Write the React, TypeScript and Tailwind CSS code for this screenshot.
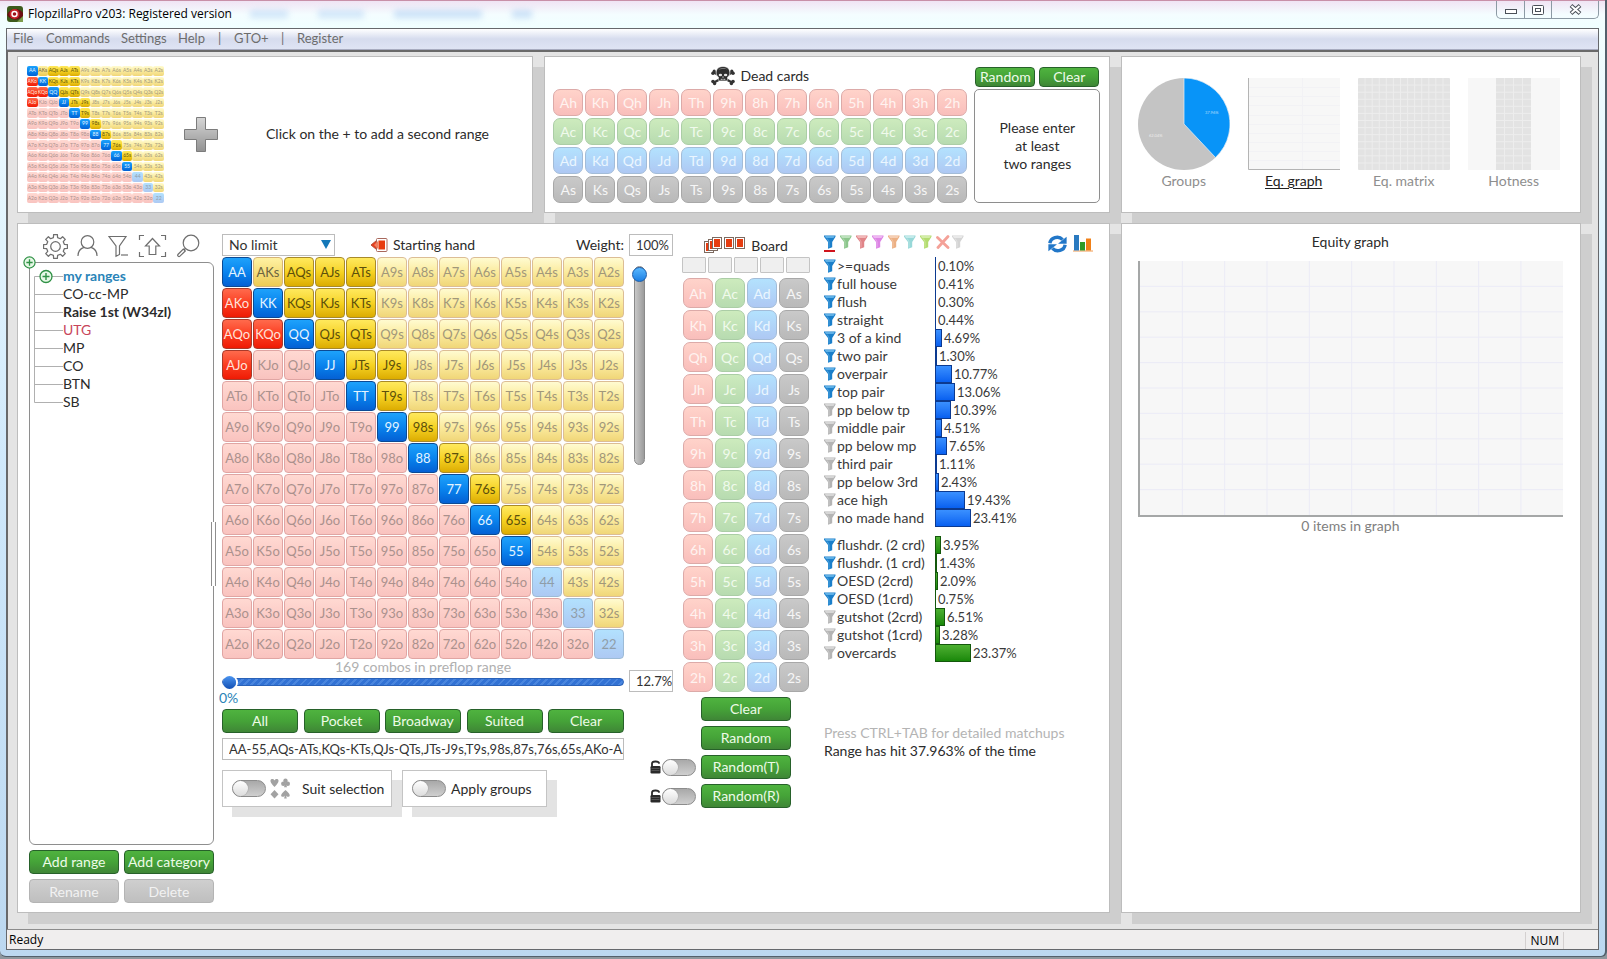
import React from "react";

const RANKS = ["A", "K", "Q", "J", "T", "9", "8", "7", "6", "5", "4", "3", "2"];

const SELECTED = new Set(
  "AA KK QQ JJ TT 99 88 77 66 55 AQs AJs ATs KQs KJs KTs QJs QTs JTs J9s T9s 98s 87s 76s 65s AKo AQo AJo KQo".split(" "),
);

const CELL = {
  pairOn: "border-[#0b4a94] bg-linear-to-b from-[#1ea2fb] via-[#0a84ee] to-[#0560d4] text-[#e4f4ff]",
  pairOff: "border-[#9dbbd6] bg-linear-to-b from-[#b2e1fe] to-[#adc9f3] text-[#8f9da8]",
  suitedOn: "border-[#a88a2a] bg-linear-to-b from-[#ffe95c] via-[#f6d321] to-[#dcac00] text-[#5c4f0c]",
  suitedHalf: "border-[#d6b478] bg-linear-to-b from-[#fff2a2] to-[#edcb52] text-[#6c6440]",
  suitedOff: "border-[#dcbd95] bg-linear-to-b from-[#fffbd0] via-[#fbeb9e] to-[#f0d678] text-[#a1977a]",
  offOn: "border-[#a93a2a] bg-linear-to-b from-[#ff6a4c] via-[#fb3b1e] to-[#ef1a04] text-[#ffe2da]",
  offOff: "border-[#e0a5a3] bg-linear-to-b from-[#ffd9d2] to-[#f9c3bf] text-[#ab918d]",
};

function handAt(r: number, c: number) {
  if (r === c) return RANKS[r] + RANKS[r];
  return r < c ? RANKS[r] + RANKS[c] + "s" : RANKS[c] + RANKS[r] + "o";
}

function cellStyle(r: number, c: number) {
  const hand = handAt(r, c);
  const on = SELECTED.has(hand);
  if (r === c) return on ? CELL.pairOn : CELL.pairOff;
  if (hand === "AKs") return CELL.suitedHalf;
  if (r < c) return on ? CELL.suitedOn : CELL.suitedOff;
  return on ? CELL.offOn : CELL.offOff;
}

function HandMatrix() {
  return (
    <div className="mt-px grid grid-cols-13 gap-px">
      {RANKS.map((_, r) =>
        RANKS.map((_, c) => (
          <button
            key={r + "-" + c}
            className={"flex h-[30px] min-w-0 items-center justify-center rounded-[4px] border px-0 pt-[2px] pb-0 text-[13px] " + cellStyle(r, c)}
          >
            {handAt(r, c)}
          </button>
        )),
      )}
    </div>
  );
}

function MiniMatrix() {
  return (
    <button aria-label="Range 1" className="grid size-[137px] shrink-0 grid-cols-13 grid-rows-13 gap-y-px">
      {RANKS.map((_, r) =>
        RANKS.map((_, c) => (
          <span
            key={r + "-" + c}
            className={"flex min-w-0 items-center justify-center overflow-hidden rounded-[2px] text-[5px] leading-none " + cellStyle(r, c)}
          >
            {handAt(r, c)}
          </span>
        )),
      )}
    </button>
  );
}

const SUITS = [
  { id: "h", style: "border-[#dcaaa8] bg-linear-to-b from-[#ffd3ca] to-[#f9bebb] text-[#fff3f0]" },
  { id: "c", style: "border-[#abcda6] bg-linear-to-b from-[#cdebbd] to-[#b7dbb0] text-[#f0faec]" },
  { id: "d", style: "border-[#a3bcd8] bg-linear-to-b from-[#b3e2fe] to-[#aec8f3] text-[#eaf6ff]" },
  { id: "s", style: "border-[#a8a8a8] bg-linear-to-b from-[#c9c9c9] to-[#b9b9b9] text-[#f6f6f6]" },
];

function Card({ rank, suit, size }: { rank: string; suit: (typeof SUITS)[number]; size: string }) {
  return (
    <button className={"flex min-w-0 items-center justify-center rounded-[7px] border p-0 text-[14px] " + size + " " + suit.style}>
      {rank + suit.id}
    </button>
  );
}

function GreenButton({ children, className = "" }: { children: React.ReactNode; className?: string }) {
  return (
    <button
      className={
        "flex items-center justify-center rounded-[4px] border border-[#27612a] bg-linear-to-b from-[#4fb33f] via-[#45a338] to-[#3f8636] pb-px text-[14px] whitespace-nowrap text-[#eefbe8] " +
        className
      }
    >
      {children}
    </button>
  );
}

function Toggle({ id, label }: { id: string; label?: string }) {
  return (
    <input
      id={id}
      type="checkbox"
      aria-label={label}
      className="h-[17px] w-[34px] shrink-0 appearance-none rounded-full border border-[#8c8c8c] bg-linear-to-b from-[#a9a9a9] to-[#cfcfcf] before:block before:size-[15px] before:rounded-full before:bg-linear-to-b before:from-[#ffffff] before:to-[#dcdcdc] before:shadow-[0_0_1px_#666] before:content-['']"
    />
  );
}

function Funnel({ color, light }: { color: string; light: string }) {
  return (
    <svg width="12" height="14" viewBox="0 0 12 14" className="shrink-0" aria-hidden="true">
      <path d="M0 0.600h11.500v1.200L8.200 7v5.200L4 13.800V7L0 1.800z" fill={color} />
      <path d="M0.800 1h9.900L9.600 3H2z" fill={light} opacity="0.700" />
      <path d="M3.200 3.500L5 6.800V12.500" fill="none" stroke={light} strokeWidth="1" opacity="0.500" />
    </svg>
  );
}

function Plus() {
  return (
    <svg width="13" height="13" viewBox="0 0 14 14" aria-hidden="true">
      <circle cx="7" cy="7" r="6" fill="#e6f8e6" stroke="#2f9145" strokeWidth="1.3" />
      <path d="M3.6 7h6.8M7 3.6v6.8" stroke="#2f9145" strokeWidth="1.4" />
    </svg>
  );
}

function Skull() {
  return (
    <svg width="24" height="20" viewBox="0 0 24 20" aria-hidden="true">
      <g stroke="#333" strokeWidth="2.4" strokeLinecap="round">
        <path d="M3 6.5l18 10M21 6.5l-18 10" />
      </g>
      <g fill="#333">
        <circle cx="2" cy="7.3" r="1.8" />
        <circle cx="3.2" cy="5.2" r="1.6" />
        <circle cx="22" cy="7.3" r="1.8" />
        <circle cx="20.8" cy="5.2" r="1.6" />
        <circle cx="2" cy="15.5" r="1.8" />
        <circle cx="3.6" cy="17.6" r="1.7" />
        <circle cx="22" cy="15.5" r="1.8" />
        <circle cx="20.4" cy="17.6" r="1.7" />
      </g>
      <path d="M12 0.500c-4.600 0-6.800 2.800-6.800 6 0 2.300.8 3.700 2.200 4.500v2.600c0 .9.600 1.300 1.300 1.300h6.600c.7 0 1.300-.4 1.300-1.300V11c1.400-.8 2.200-2.200 2.200-4.500 0-3.200-2.200-6-6.800-6z" fill="#2e2e2e" stroke="#fff" strokeWidth="0.6" />
      <path d="M7.500 3.800c1.200-2.300 7.500-2.600 9-.2-2.200-.8-6.800-.8-9 .2z" fill="#777" />
      <ellipse cx="9.400" cy="9" rx="1.700" ry="1.300" fill="#e6e6e6" />
      <ellipse cx="14.600" cy="9" rx="1.700" ry="1.300" fill="#e6e6e6" />
      <path d="M12 10l-.9 1.500h1.800zM9.800 12.800h.9v1.300h-.9zM11.550 12.800h.9v1.300h-.9zM13.300 12.800h.9v1.300h-.9z" fill="#e6e6e6" />
    </svg>
  );
}

const GEAR_TEETH = [0, 45, 90, 135, 180, 225, 270, 315];

function gearPath() {
  const pts: string[] = [];
  GEAR_TEETH.forEach((deg) => {
    [
      [-13, 8.8],
      [-9, 11.6],
      [9, 11.6],
      [13, 8.8],
    ].forEach(([off, rad]) => {
      const a = ((deg + off) * Math.PI) / 180;
      pts.push((12 + rad * Math.cos(a)).toFixed(2) + " " + (12 + rad * Math.sin(a)).toFixed(2));
    });
  });
  return "M" + pts.join("L") + "z";
}

function Toolbar() {
  const line = { fill: "none", stroke: "#6e6e6e", strokeWidth: 1.2 } as const;
  return (
    <div className="flex h-[28px] items-start pl-[14px]">
      <button aria-label="Settings" className="mr-[9px]">
        <svg width="25" height="25" viewBox="0 0 24 24" {...line} strokeLinejoin="round">
          <path d={gearPath()} />
          <circle cx="12" cy="12" r="4.600" />
        </svg>
      </button>
      <button aria-label="Profile" className="mr-[10px]">
        <svg width="21" height="24" viewBox="0 0 21 24" {...line}>
          <circle cx="10.500" cy="8" r="6.300" />
          <path d="M1 22c0-5 2.500-7.500 6-8.600M20 22c0-5-2.500-7.500-6-8.600" />
        </svg>
      </button>
      <button aria-label="Filter" className="mr-[10px]">
        <svg width="20" height="24" viewBox="0 0 20 24" {...line}>
          <path d="M1 2.500h17L11.500 12v8.500l-3.500 1.800V12z" />
          <path d="M13 21h7" />
        </svg>
      </button>
      <button aria-label="Load" className="mr-[10px]">
        <svg width="29" height="24" viewBox="0 0 29 24" {...line}>
          <path d="M6 1.500H1.500V6M23 1.500h4.500V6M6 22.500H1.500V18M23 22.500h4.500V18" />
          <path d="M14.500 4.500l7 7.500h-3.700v8.500h-6.600V12H7.500z" />
        </svg>
      </button>
      <button aria-label="Search">
        <svg width="23" height="24" viewBox="0 0 23 24" {...line}>
          <circle cx="14" cy="9" r="7.800" />
          <path d="M8.400 14.500L6.800 16M6.300 15l2 2-5.600 5.400c-1 .8-2.600-.8-1.800-1.900z" />
        </svg>
      </button>
    </div>
  );
}

const TREE = [
  { name: "my ranges", style: "font-bold text-[#2a84b8]", plus: true },
  { name: "CO-cc-MP", style: "" },
  { name: "Raise 1st (W34zl)", style: "font-bold" },
  { name: "UTG", style: "text-[#c8455a]" },
  { name: "MP", style: "" },
  { name: "CO", style: "" },
  { name: "BTN", style: "" },
  { name: "SB", style: "" },
];

function RangeTree() {
  return (
    <div className="relative flex-1 rounded-[6px] rounded-tl-none border border-[#8e8e8e] pt-[4px] pl-[4px]">
      <button aria-label="Expand all" className="absolute -top-[7px] -left-[7px]">
        <Plus />
      </button>
      <ul>
        {TREE.map((t, i) => (
          <li key={t.name} className={"flex h-[18px] items-center " + t.style}>
            <svg width="29" height="18" className="shrink-0" aria-hidden="true">
              <path
                d={i === 0 ? "M.5 18V9.500H29" : i === TREE.length - 1 ? "M.5 0V9.500H29" : "M.5 0V18M.5 9.500H29"}
                fill="none"
                stroke="#b0b0b0"
              />
              {t.plus && (
                <>
                  <circle cx="12" cy="9.500" r="6" fill="#e6f8e6" stroke="#2f9145" strokeWidth="1.300" />
                  <path d="M8.500 9.500h7M12 6v7" stroke="#2f9145" strokeWidth="1.400" />
                </>
              )}
            </svg>
            <a href="#" className="text-[14px] leading-[18px]">
              {t.name}
            </a>
          </li>
        ))}
      </ul>
      <div className="absolute top-[259px] -right-[3px] h-[64px] w-[5px] border-x border-[#8e8e8e] bg-white" />
    </div>
  );
}

const MADE: [string, number, boolean][] = [
  [">=quads", 0.1, true],
  ["full house", 0.41, true],
  ["flush", 0.3, true],
  ["straight", 0.44, true],
  ["3 of a kind", 4.69, true],
  ["two pair", 1.3, true],
  ["overpair", 10.77, true],
  ["top pair", 13.06, true],
  ["pp below tp", 10.39, false],
  ["middle pair", 4.51, false],
  ["pp below mp", 7.65, false],
  ["third pair", 1.11, false],
  ["pp below 3rd", 2.43, false],
  ["ace high", 19.43, false],
  ["no made hand", 23.41, false],
];

const DRAWS: [string, number, boolean][] = [
  ["flushdr. (2 crd)", 3.95, true],
  ["flushdr. (1 crd)", 1.43, true],
  ["OESD (2crd)", 2.09, true],
  ["OESD (1crd)", 0.75, true],
  ["gutshot (2crd)", 6.51, false],
  ["gutshot (1crd)", 3.28, false],
  ["overcards", 23.37, false],
];

function StatTable({ rows, bar, className = "" }: { rows: [string, number, boolean][]; bar: string; className?: string }) {
  return (
    <table className={"w-full table-fixed border-collapse text-[14px] leading-[18px] text-[#3a3a3a] " + className}>
      <tbody>
        {rows.map(([name, pct, on]) => (
          <tr key={name} className="h-[18px]">
            <td className="w-[13px] p-0">
              <button aria-label={"Filter " + name} className="block">
                {on ? <Funnel color="#1b7fca" light="#7cc4f2" /> : <Funnel color="#b4b4b4" light="#e4e4e4" />}
              </button>
            </td>
            <th scope="row" className="w-[98px] p-0 text-left font-normal whitespace-nowrap">
              {name}
            </th>
            <td className="p-0">
              <div className="flex">
                <span
                  className={"box-border h-[18px] border-y border-l " + (pct < 1 ? "border-r-0 " : "border-r ") + bar}
                  style={{ width: Math.max(1, Math.round(pct * 1.55)) }}
                />
                <span className="pl-[2px] text-[13px]">{pct.toFixed(2)}%</span>
              </div>
            </td>
          </tr>
        ))}
      </tbody>
    </table>
  );
}

const FILTERS = [
  ["#1b7fca", "#7cc4f2"],
  ["#8cc68c", "#d0ecd0"],
  ["#e08488", "#f8cccc"],
  ["#dc84e4", "#f6ccf8"],
  ["#ecb084", "#fadcc8"],
  ["#98d8d8", "#d6f2f2"],
  ["#b4dc70", "#e0f4c0"],
  ["x", ""],
  ["#d4d4d4", "#f2f2f2"],
];

function FilterBar() {
  return (
    <div className="flex h-[22px] items-start pt-px">
      {FILTERS.map(([c, l], i) => (
        <button key={i} aria-label={"Filter " + (i + 1)} className="flex w-[16px] flex-col">
          {c === "x" ? (
            <svg width="14" height="14" viewBox="0 0 14 14" aria-hidden="true">
              <path d="M1.500 2.500L12 12.500M12 1.500L2 12.500" stroke="#f4a198" strokeWidth="2.800" strokeLinecap="round" />
            </svg>
          ) : (
            <Funnel color={c} light={l} />
          )}
          {i === 0 && <span className="mt-px h-[2px] w-[11px] bg-[#d0141c]" />}
        </button>
      ))}
      <button aria-label="Refresh" className="mr-[6px] ml-auto">
        <svg width="19" height="18" viewBox="0 0 19 18" aria-hidden="true">
          <path d="M1.900 8.300A7.300 6.800 0 0 1 14.600 4.600" fill="none" stroke="#2277c8" strokeWidth="3.400" />
          <path d="M18.600 1.800v7h-8.600z" fill="#2277c8" />
          <path d="M17.100 9.700A7.300 6.800 0 0 1 4.400 13.400" fill="none" stroke="#2277c8" strokeWidth="3.400" />
          <path d="M.4 16.200v-7H9z" fill="#2277c8" />
        </svg>
      </button>
      <button aria-label="Chart" className="mr-[6px]">
        <svg width="20" height="17" viewBox="0 0 20 17" aria-hidden="true">
          <path d="M0 16h20" stroke="#f09a50" />
          <path d="M1 0h5v15.500H1z" fill="#2a7ac0" />
          <path d="M7 7h5v8.500H7z" fill="#2e9a28" />
          <path d="M13 3.500h5v12h-5z" fill="#f08018" />
        </svg>
      </button>
    </div>
  );
}

function Lock() {
  return (
    <svg width="11" height="14" viewBox="0 0 11 14" className="mr-px" aria-hidden="true">
      <path d="M2 7V3.600C2 1 8.600 .6 9.200 3.600" fill="none" stroke="#2a2a2a" strokeWidth="1.800" />
      <rect x="0.500" y="6" width="10" height="7.500" rx="1.200" fill="#2a2a2a" />
      <path d="M1.500 8.500h8M1.500 10.500h8" stroke="#666" strokeWidth="0.700" />
    </svg>
  );
}

function BoardIcon() {
  const cards: [number, number][] = [
    [0.5, 5.5],
    [4.5, 3.5],
    [8.5, 1.5],
    [20.5, 1.5],
    [31.5, 1.5],
  ];
  return (
    <svg width="42" height="18" viewBox="0 0 42 18" aria-hidden="true">
      {cards.map(([x, y]) => (
        <g key={x}>
          <rect x={x} y={y} width="9" height="11" fill="#fff" stroke="#7c6a60" />
          <rect x={x + 1.5} y={y + 1.5} width="6" height="8" fill="#e63c10" />
        </g>
      ))}
    </svg>
  );
}

const panel = "min-w-0 border border-[#bdbdbd] bg-white shadow-[11px_11px_0_#cecece]";
const field = "h-[22px] min-w-0 border border-[#bcbcbc] bg-white py-0 text-[#333]";

function ChartTab({ label, active, children }: { label: string; active?: boolean; children: React.ReactNode }) {
  return (
    <button className={"flex w-[92px] flex-col items-center gap-[2px] text-[14px] leading-[18px] " + (active ? "text-[#222] underline underline-offset-2" : "text-[#8e8e8e]")}>
      {children}
      {label}
    </button>
  );
}

function EquityGraph() {
  const steps = [10, 20, 30, 40, 50, 60, 70, 80, 90];
  return (
    <svg className="mt-[10px] h-[256px] w-full border-b-2 border-l-2 border-[#a5a7a7] bg-[#f7f7f7]" role="img" aria-label="Equity graph">
      {steps.map((s) => (
        <g key={s} stroke="#ebebf6">
          <line x1={s + "%"} x2={s + "%"} y1="0" y2="100%" />
          <line y1={s + "%"} y2={s + "%"} x1="0" x2="100%" />
        </g>
      ))}
    </svg>
  );
}

export default function App() {
  return (
    <div className="flex min-h-screen flex-col bg-[#8e979d] font-['Lato',sans-serif] text-[14px] text-[#2b2b2b]">
      <div className="mb-[2px] flex flex-1 flex-col rounded-b-[6px] border-r-2 border-b border-[#53606c] bg-linear-to-b from-[#f4ffff] via-[#cfe8fb] to-[#bcd8f0] pr-[6px] pb-[6px] pl-[6px]">
        <header className="relative -mr-[6px] -ml-[6px] flex h-[28px] items-start justify-between overflow-hidden border-t border-[#c890a8] bg-linear-to-b from-[#f0e4f4] via-[#f4fdff] to-[#f0ffff] pr-[6px] pl-[7px]">
          <div className="absolute top-[9px] left-[250px] flex gap-[30px] opacity-40 blur-[3px]" aria-hidden="true">
            <span className="h-[8px] w-[38px] bg-[#9cc4f0]" />
            <span className="h-[8px] w-[46px] bg-[#9cc4f0]" />
            <span className="h-[8px] w-[88px] bg-[#8cb8ec]" />
            <span className="h-[8px] w-[20px] bg-[#8cb8ec]" />
          </div>
          <div className="relative flex h-[26px] items-center gap-[5px] font-['Open_Sans',sans-serif] text-[12px] text-black">
            <svg width="16" height="16" viewBox="0 0 16 16" aria-hidden="true">
              <rect width="16" height="16" rx="3" fill="#3c5a1c" />
              <path d="M0 9C3 2 12 1 16 7v3C12 15 4 15 0 9z" fill="#6b1014" />
              <circle cx="7.500" cy="8" r="5" fill="#c8242c" />
              <circle cx="7.500" cy="8" r="3.200" fill="#fff" />
              <circle cx="7.500" cy="8" r="1.800" fill="#9c1018" />
              <path d="M10 16L16 10v6z" fill="#7c9c4c" />
            </svg>
            FlopzillaPro v203: Registered version
          </div>
          <div className="relative flex h-[18px] rounded-b-[5px] border border-t-0 border-[#8c9aa4] text-[#4a5058]">
            <button aria-label="Minimize" className="flex w-[28px] items-center justify-center border-r border-[#8c9aa4]">
              <svg width="12" height="10" viewBox="0 0 12 10">
                <rect x="0.500" y="4.500" width="11" height="4" fill="#fff" stroke="currentColor" />
              </svg>
            </button>
            <button aria-label="Maximize" className="flex w-[27px] items-center justify-center border-r border-[#8c9aa4]">
              <svg width="12" height="10" viewBox="0 0 12 10">
                <rect x="0.500" y="0.500" width="11" height="9" rx="1" fill="#fff" stroke="currentColor" />
                <rect x="3.500" y="3.500" width="5" height="3" fill="#fff" stroke="currentColor" />
              </svg>
            </button>
            <button aria-label="Close" className="flex w-[46px] items-center justify-center">
              <svg width="13" height="11" viewBox="0 0 13 11">
                <path d="M2 1.500l9 8M11 1.500l-9 8" stroke="currentColor" strokeWidth="4" />
                <path d="M2.500 2l8 7M10.500 2l-8 7" stroke="#fff" strokeWidth="2" />
              </svg>
            </button>
          </div>
        </header>

        <div className="flex flex-1 flex-col border border-[#66686c] bg-[#e4e4e4]">
          <nav className="flex h-[21px] items-center border-b border-[#a8acc0] bg-linear-to-b from-white via-[#d6dcee] to-[#dfe4f4] pl-[6px] text-[13px] text-[#6d6d6d]">
            <button className="w-[33px] text-left">File</button>
            <button className="w-[75px] text-left">Commands</button>
            <button className="w-[57px] text-left">Settings</button>
            <button className="w-[40px] text-left">Help</button>
            <span className="w-[16px]">|</span>
            <button className="w-[47px] text-left">GTO+</button>
            <span className="w-[16px]">|</span>
            <button>Register</button>
          </nav>

          <main className="grid flex-1 grid-cols-[516fr_565fr_460fr] grid-rows-[157px_1fr] gap-x-[11px] gap-y-[10px] border-t-2 border-l border-[#6a6a6a] pt-[4px] pr-[17px] pb-[16px] pl-[9px]">
            <section className={panel + " flex items-start pt-[9px] pl-[9px]"}>
              <MiniMatrix />
              <button aria-label="Add range" className="mt-[50px] ml-[20px]">
                <svg width="34" height="36" viewBox="0 0 34 36">
                  <defs>
                    <linearGradient id="plusFill" x1="0" y1="0" x2="0" y2="1">
                      <stop offset="0" stopColor="#d6d6d6" />
                      <stop offset="1" stopColor="#929292" />
                    </linearGradient>
                  </defs>
                  <path d="M12.500 1.500h9v12h12v10h-12v12h-9v-12h-12v-10h12z" fill="url(#plusFill)" stroke="#7c7c7c" />
                </svg>
              </button>
              <p className="mt-[59px] ml-[48px] leading-[18px]">Click on the + to add a second range</p>
            </section>

            <section className={panel + " flex gap-[7px] pt-[9px] pl-[8px]"}>
              <div className="w-[414px]">
                <h2 className="flex h-[23px] items-center justify-center gap-[5px] pb-[4px]">
                  <Skull />
                  Dead cards
                </h2>
                <div className="grid grid-cols-13 gap-[2px]">
                  {SUITS.map((s) => RANKS.map((r) => <Card key={r + s.id} rank={r} suit={s} size="h-[27px]" />))}
                </div>
              </div>
              <div className="w-[126px] pt-px">
                <div className="flex justify-between px-px">
                  <GreenButton className="h-[20px] w-[60px]">Random</GreenButton>
                  <GreenButton className="h-[20px] w-[60px]">Clear</GreenButton>
                </div>
                <div className="mt-[2px] flex h-[114px] items-center justify-center rounded-[5px] border border-[#8e8e8e] text-center leading-[18px]">
                  Please enter
                  <br />
                  at least
                  <br />
                  two ranges
                </div>
              </div>
            </section>

            <section className={panel + " flex items-start gap-[18px] pt-[21px] pl-[16px]"}>
              <ChartTab label="Groups">
                <svg width="92" height="92" viewBox="0 0 92 92" aria-hidden="true">
                  <circle cx="46" cy="46" r="46" fill="#c4c4c4" />
                  <path d="M46 46V0A46 46 0 0 1 77.500 79.500z" fill="#0894f8" stroke="#e8f2fa" strokeWidth="0.700" />
                  <text x="67" y="36" fontSize="4" fill="#b4defb">37.96%</text>
                  <text x="11" y="59" fontSize="4" fill="#ececec">62.04%</text>
                </svg>
              </ChartTab>
              <ChartTab label="Eq. graph" active>
                <svg width="92" height="92" viewBox="0 0 92 92" aria-hidden="true">
                  <rect width="92" height="92" fill="#f7f7f7" />
                  <path d="M0 9.500h92M0 18.500h92M0 27.500h92M0 37.500h92M0 46.500h92M0 55.500h92M0 64.500h92M0 73.500h92M0 82.500h92M54.500 0v92" stroke="#f2f2f5" />
                  <path d="M.5 0v91.500H92" fill="none" stroke="#b4b4b4" />
                </svg>
              </ChartTab>
              <ChartTab label="Eq. matrix">
                <svg width="92" height="92" viewBox="0 0 92 92" aria-hidden="true">
                  <rect width="92" height="92" rx="1" fill="#e3e3e3" />
                  {RANKS.slice(1).map((_, i) => (
                    <path key={i} d={"M" + (i + 1) * 7.08 + " 0v92M0 " + (i + 1) * 7.08 + "h92"} stroke="#ededed" />
                  ))}
                </svg>
              </ChartTab>
              <ChartTab label="Hotness">
                <svg width="92" height="92" viewBox="0 0 92 92" aria-hidden="true">
                  <rect width="92" height="92" fill="#f7f7f7" />
                  <rect x="28" width="35" height="92" fill="#e3e3e3" />
                  {RANKS.slice(1).map((_, i) => (
                    <path key={i} d={"M28 " + (i + 1) * 7.08 + "h35"} stroke="#ededed" />
                  ))}
                  <path d="M36.500 0v92M45.500 0v92M54.500 0v92" stroke="#ededed" />
                </svg>
              </ChartTab>
            </section>

            <section className={panel + " col-span-2 flex pt-[10px] pr-[10px] pl-[11px]"}>
              <aside className="mr-[8px] flex w-[185px] flex-col pb-[9px]">
                <Toolbar />
                <RangeTree />
                <div className="mt-[5px] grid grid-cols-2 gap-[5px]">
                  <GreenButton className="h-[24px]">Add range</GreenButton>
                  <GreenButton className="h-[24px]">Add category</GreenButton>
                  <button className="h-[24px] rounded-[4px] border border-[#b4b4b4] bg-linear-to-b from-[#cfcfcf] to-[#bfbfbf] text-[#f2f2f2]">Rename</button>
                  <button className="h-[24px] rounded-[4px] border border-[#b4b4b4] bg-linear-to-b from-[#cfcfcf] to-[#bfbfbf] text-[#f2f2f2]">Delete</button>
                </div>
              </aside>

              <div className="mr-[5px] w-[402px]">
                <div className="flex h-[22px] items-center">
                  <div className="relative">
                    <select aria-label="Limit" className={field + " block w-[113px] appearance-none pl-[6px] text-[14px] leading-[18px]"}>
                      <option>No limit</option>
                    </select>
                    <svg width="10" height="9" viewBox="0 0 10 9" className="pointer-events-none absolute top-[6px] right-[4px]" aria-hidden="true">
                      <path d="M0 0h10L5 9z" fill="#1478b8" />
                    </svg>
                  </div>
                  <h2 className="ml-[35px] flex items-center gap-[5px] pb-px">
                    <svg width="18" height="16" viewBox="0 0 18 16" aria-hidden="true">
                      <path d="M9 1.500L1 8l8 6.500z" fill="#e83c1c" stroke="#b85038" />
                      <rect x="6.500" y="1.500" width="10.500" height="13" rx="1" fill="#fff" stroke="#a8685c" />
                      <path d="M8.500 3.500h6.500v9H8.500z" fill="#e83c10" />
                      <path d="M8.500 3.500L4 8l4.500 4.500" fill="#f08060" />
                    </svg>
                    Starting hand
                  </h2>
                  <label htmlFor="weight" className="ml-auto pb-px">
                    Weight:
                  </label>
                </div>
                <HandMatrix />
                <p className="text-center leading-[16px] text-[#b0b0b0]">169 combos in preflop range</p>
                <input
                  type="range"
                  aria-label="Preflop range size"
                  defaultValue={0}
                  className="block h-[13px] w-full appearance-none bg-transparent [&::-webkit-slider-runnable-track]:h-[8px] [&::-webkit-slider-runnable-track]:rounded-full [&::-webkit-slider-runnable-track]:border [&::-webkit-slider-runnable-track]:border-[#2a62b8] [&::-webkit-slider-runnable-track]:bg-[repeating-linear-gradient(135deg,#3272d4_0_3px,#4a86de_3px_5px)] [&::-webkit-slider-thumb]:-mt-[3px] [&::-webkit-slider-thumb]:size-[13px] [&::-webkit-slider-thumb]:appearance-none [&::-webkit-slider-thumb]:rounded-full [&::-webkit-slider-thumb]:bg-linear-to-b [&::-webkit-slider-thumb]:from-[#4a94f0] [&::-webkit-slider-thumb]:to-[#1450b4] [&::-webkit-slider-thumb]:shadow-[1px_0_0_1px_white]"
                />
                <p className="-ml-[3px] leading-[20px] text-[#2a84b8]">0%</p>
                <div className="mt-px flex justify-between">
                  {["All", "Pocket", "Broadway", "Suited", "Clear"].map((b) => (
                    <GreenButton key={b} className="h-[24px] w-[76px]">
                      {b}
                    </GreenButton>
                  ))}
                </div>
                <input
                  aria-label="Range text"
                  defaultValue="AA-55,AQs-ATs,KQs-KTs,QJs-QTs,JTs-J9s,T9s,98s,87s,76s,65s,AKo-AJo,KQo"
                  className={field + " mt-[5px] block w-full pl-[6px] text-[13px]"}
                />
                <div className="mt-[10px] flex gap-[10px]">
                  <div className="flex h-[37px] w-[170px] items-center border border-[#c4c4c4] bg-white pl-[9px] shadow-[10px_10px_0_#e3e3e3]">
                    <Toggle id="suit" />
                    <svg width="22" height="21" viewBox="0 0 22 21" className="ml-[4px]" fill="#a2a2a2" aria-hidden="true">
                      <path d="M4.500 9C-1 4 0 1 2.300 1 3.500 1 4.200 1.600 4.500 2.500 4.800 1.600 5.500 1 6.700 1 9 1 10 4 4.500 9z" />
                      <path d="M4.500 12l4 4.300-4 4.200-4-4.200z" />
                      <circle cx="15.500" cy="2.800" r="2.200" />
                      <circle cx="13.300" cy="5.800" r="2.200" />
                      <circle cx="17.800" cy="5.800" r="2.200" />
                      <path d="M15.500 4l1.500 5.200h-3z" />
                      <path d="M15.500 12c5 4 5 6.500 3 6.800-1.200.2-2-.4-2.500-1.200l.8 3h-2.700l.8-3c-.5.8-1.300 1.400-2.500 1.200-2-.3-1.900-2.800 3.100-6.800z" />
                    </svg>
                    <label htmlFor="suit" className="ml-[10px] whitespace-nowrap">
                      Suit selection
                    </label>
                  </div>
                  <div className="flex h-[37px] w-[145px] items-center border border-[#c4c4c4] bg-white pl-[9px] shadow-[10px_10px_0_#e3e3e3]">
                    <Toggle id="groups" />
                    <label htmlFor="groups" className="ml-[5px] whitespace-nowrap">
                      Apply groups
                    </label>
                  </div>
                </div>
              </div>

              <div className="mr-[14px] w-[181px]">
                <div className="flex gap-[9px]">
                  <div className="flex w-[44px] flex-col">
                    <input id="weight" defaultValue="100%" className={field + " w-full pl-[6px] text-[13px]"} />
                    <input
                      type="range"
                      aria-label="Weight"
                      defaultValue={100}
                      className="mt-[10px] ml-[3px] block h-[199px] w-[15px] appearance-none bg-transparent [direction:rtl] [writing-mode:vertical-lr] [&::-webkit-slider-runnable-track]:w-[11px] [&::-webkit-slider-runnable-track]:rounded-full [&::-webkit-slider-runnable-track]:border [&::-webkit-slider-runnable-track]:border-[#8a8a8a] [&::-webkit-slider-runnable-track]:bg-linear-to-r [&::-webkit-slider-runnable-track]:from-[#c8c8c8] [&::-webkit-slider-runnable-track]:to-[#9c9c9c] [&::-webkit-slider-thumb]:-ml-[3px] [&::-webkit-slider-thumb]:size-[15px] [&::-webkit-slider-thumb]:appearance-none [&::-webkit-slider-thumb]:rounded-full [&::-webkit-slider-thumb]:border [&::-webkit-slider-thumb]:border-[#1c5ca8] [&::-webkit-slider-thumb]:bg-linear-to-b [&::-webkit-slider-thumb]:from-[#58b8ff] [&::-webkit-slider-thumb]:to-[#1c80e4]"
                    />
                    <input aria-label="Range percentage" defaultValue="12.7%" className={field + " mt-auto w-full pl-[6px] text-[13px]"} />
                  </div>
                  <div className="w-[128px]">
                    <h2 className="flex h-[22px] items-center justify-center gap-[5px]">
                      <BoardIcon />
                      Board
                    </h2>
                    <div className="mt-px grid grid-cols-5 gap-[2px]">
                      {[1, 2, 3, 4, 5].map((n) => (
                        <div key={n} className="h-[16px] rounded-[1px] border border-[#c4c4c4] bg-[#efefef]" />
                      ))}
                    </div>
                    <div className="mx-px mt-[5px] grid grid-cols-4 gap-[2px]">
                      {RANKS.map((r) => SUITS.map((s) => <Card key={r + s.id} rank={r} suit={s} size="h-[30px]" />))}
                    </div>
                  </div>
                </div>
                <div className="mt-[5px] flex flex-col items-end gap-[5px] pr-[19px]">
                  <GreenButton className="h-[24px] w-[90px]">Clear</GreenButton>
                  <GreenButton className="h-[24px] w-[90px]">Random</GreenButton>
                  {["Random(T)", "Random(R)"].map((b) => (
                    <div key={b} className="flex items-center">
                      <Lock />
                      <Toggle id={b} label={"Lock " + b} />
                      <GreenButton className="ml-[5px] h-[24px] w-[90px]">{b}</GreenButton>
                    </div>
                  ))}
                </div>
              </div>

              <div className="min-w-0 flex-1">
                <FilterBar />
                <StatTable rows={MADE} bar="border-[#0c3a90] bg-linear-to-b from-[#3a90ff] to-[#0860f0]" className="mt-px" />
                <StatTable rows={DRAWS} bar="border-[#14580c] bg-linear-to-b from-[#4cb030] to-[#188808]" className="mt-[9px]" />
                <p className="mt-[62px] leading-[18px] text-[#b4b4b4]">Press CTRL+TAB for detailed matchups</p>
                <p className="leading-[18px]">Range has hit 37.963% of the time</p>
              </div>
            </section>

            <section className={panel + " pt-[8px] pr-[17px] pl-[16px] text-center"}>
              <h2 className="leading-[19px]">Equity graph</h2>
              <EquityGraph />
              <p className="leading-[18px] text-[#808080]">0 items in graph</p>
            </section>
          </main>

          <footer className="flex h-[20px] items-center border-t border-[#8c8c8c] bg-[#f0eeee] pt-px pl-[2px] font-['Open_Sans',sans-serif] text-[12px] text-black">
            Ready
            <span className="mr-[34px] ml-auto border-x border-[#d4d0d0] px-[4px] leading-[17px]">NUM</span>
          </footer>
        </div>
      </div>
    </div>
  );
}
